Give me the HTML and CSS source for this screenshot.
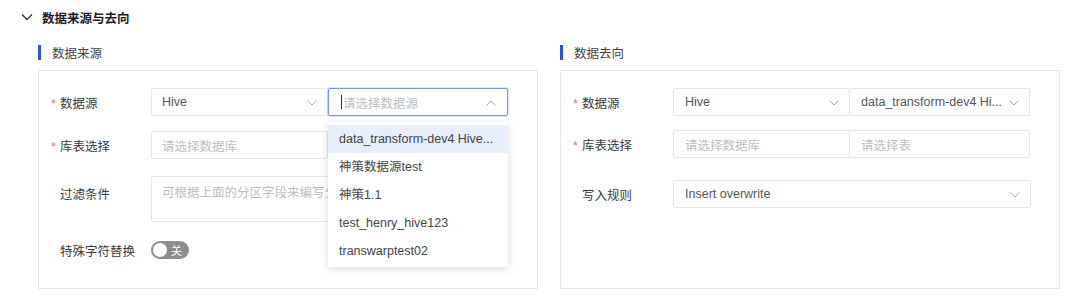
FILE: index.html
```html
<!DOCTYPE html>
<html lang="zh-CN">
<head>
<meta charset="utf-8">
<title>数据来源与去向</title>
<link rel="stylesheet" href="styles.css">
</head>
<body>
<div class="page">
  <div class="header">
    <svg class="collapse-icon" width="12" height="8" viewBox="0 0 12 8"><path d="M1 1.5 L6 6.5 L11 1.5" fill="none" stroke="#333" stroke-width="1.3"/></svg>
    <span class="header-title">数据来源与去向</span>
  </div>
  <div class="columns">
    <section class="col">
      <div class="sub-title"><span class="bar"></span>数据来源</div>
      <div class="box">
        <div class="row">
          <div class="label"><span class="req">*</span>数据源</div>
          <div class="controls">
            <div class="select s-a">
              <span class="val">Hive</span>
              <svg class="chev" width="10" height="6" viewBox="0 0 10 6"><path d="M0.5 0.5 L5 5 L9.5 0.5" fill="none" stroke="#a8a8a8" stroke-width="1"/></svg>
            </div>
            <div class="select s-b focused">
              <span class="caret"></span><span class="ph">请选择数据源</span>
              <svg class="chev" width="10" height="6" viewBox="0 0 10 6"><path d="M0.5 5.5 L5 1 L9.5 5.5" fill="none" stroke="#a8a8a8" stroke-width="1"/></svg>
              <ul class="dropdown">
                <li class="active">data_transform-dev4 Hive...</li>
                <li>神策数据源test</li>
                <li>神策1.1</li>
                <li>test_henry_hive123</li>
                <li>transwarptest02</li>
              </ul>
            </div>
          </div>
        </div>
        <div class="row r2">
          <div class="label"><span class="req">*</span>库表选择</div>
          <div class="controls">
            <div class="select s-a"><span class="ph">请选择数据库</span></div>
            <div class="select s-b"><span class="ph">请选择表</span></div>
          </div>
        </div>
        <div class="row r3">
          <div class="label label-top">过滤条件</div>
          <div class="controls">
            <div class="textarea"><span class="ph">可根据上面的分区字段来编写分区过滤条件</span></div>
          </div>
        </div>
        <div class="row r4">
          <div class="label">特殊字符替换</div>
          <div class="controls">
            <div class="switch"><span class="knob"></span><span class="switch-text">关</span></div>
          </div>
        </div>
      </div>
    </section>
    <section class="col">
      <div class="sub-title"><span class="bar"></span>数据去向</div>
      <div class="box">
        <div class="row">
          <div class="label"><span class="req">*</span>数据源</div>
          <div class="controls">
            <div class="select s-a pad12">
              <span class="val">Hive</span>
              <svg class="chev" width="10" height="6" viewBox="0 0 10 6"><path d="M0.5 0.5 L5 5 L9.5 0.5" fill="none" stroke="#a8a8a8" stroke-width="1"/></svg>
            </div>
            <div class="select s-b pad12">
              <span class="val ellip">data_transform-dev4 Hi...</span>
              <svg class="chev" width="10" height="6" viewBox="0 0 10 6"><path d="M0.5 0.5 L5 5 L9.5 0.5" fill="none" stroke="#a8a8a8" stroke-width="1"/></svg>
            </div>
          </div>
        </div>
        <div class="row rr2">
          <div class="label"><span class="req">*</span>库表选择</div>
          <div class="controls">
            <div class="select s-a pad12"><span class="ph">请选择数据库</span></div>
            <div class="select s-b pad12"><span class="ph">请选择表</span></div>
          </div>
        </div>
        <div class="row rr3">
          <div class="label">写入规则</div>
          <div class="controls">
            <div class="select s-full pad12">
              <span class="val">Insert overwrite</span>
              <svg class="chev" width="10" height="6" viewBox="0 0 10 6"><path d="M0.5 0.5 L5 5 L9.5 0.5" fill="none" stroke="#a8a8a8" stroke-width="1"/></svg>
            </div>
          </div>
        </div>
      </div>
    </section>
  </div>
</div>
</body>
</html>
```

FILE: styles.css
```css
* { box-sizing: border-box; }
html, body { margin: 0; padding: 0; background: #fff; }
body {
  width: 1080px;
  height: 303px;
  overflow: hidden;
  font-family: "Liberation Sans", "Noto Sans CJK SC", sans-serif;
  font-size: 12.5px;
  color: #3a3a3a;
}
.header {
  height: 34px;
  display: flex;
  align-items: center;
  padding-left: 21px;
}
.collapse-icon { display: block; }
.header-title {
  margin-left: 9px;
  font-weight: bold;
  font-size: 12.5px;
  color: #1c1c1c;
}
.columns {
  display: flex;
  padding-left: 38px;
  gap: 22px;
}
.col { width: 500px; }
.sub-title {
  height: 36px;
  display: flex;
  align-items: center;
  padding-top: 1px;
  color: #444;
}
.bar {
  width: 3px;
  height: 15px;
  background: #2454f0;
  margin-right: 11px;
}
.box {
  height: 219px;
  border: 1px solid #e6e6e6;
  padding-top: 17px;
}
.row {
  display: flex;
  align-items: center;
  min-height: 28px;
}
.label {
  width: 112px;
  padding-left: 21px;
  color: #3a3a3a;
  flex: none;
}
.req {
  display: inline-block;
  width: 9px;
  margin-left: -9px;
  color: #f06a6a;
}
.controls {
  display: flex;
  position: relative;
}
.select {
  position: relative;
  height: 28px;
  border: 1px solid #e6e6e6;
  border-radius: 2px;
  display: flex;
  align-items: center;
  padding-left: 10px;
  background: #fff;
}
.pad12 { padding-left: 11px; }
.select .chev {
  position: absolute;
  right: 10px;
  top: 11px;
}
.s-a { width: 177px; }
.s-b { width: 180px; }
.s-full { width: 358px; }
.s-b:not(.focused) { border-left: none; }
.val { color: #555; white-space: nowrap; }
.ph { color: #bdbdbd; white-space: nowrap; }
.focused {
  border: 1px solid #6f96f5;
  box-shadow: 0 0 0 1px rgba(111,150,245,0.25);
  padding-left: 12px;
}
.focused .chev { right: 11px; }
.caret {
  width: 1px;
  height: 14px;
  background: #333;
  margin-right: 1px;
}
.dropdown {
  position: absolute;
  left: -1px;
  top: 33px;
  width: 180px;
  margin: 0;
  padding: 3px 0 2px;
  list-style: none;
  background: #fff;
  box-shadow: 0 2px 8px rgba(0,0,0,0.15);
  z-index: 5;
}
.dropdown li {
  height: 28px;
  line-height: 28px;
  padding-left: 11px;
  padding-right: 8px;
  color: #444;
  white-space: nowrap;
  overflow: hidden;
}
.dropdown li.active { background: #e7effd; }
.r2 { margin-top: 15px; }
.r3 { margin-top: 17px; align-items: flex-start; }
.label-top { padding-top: 8px; }
.textarea {
  width: 357px;
  height: 46px;
  border: 1px solid #e6e6e6;
  border-radius: 2px;
  padding: 5px 10px;
  overflow: hidden;
}
.r4 { margin-top: 14px; }
.switch {
  width: 38px;
  height: 18px;
  border-radius: 9px;
  background: #8e8e8e;
  display: flex;
  align-items: center;
  padding-left: 2px;
}
.knob {
  width: 14px;
  height: 14px;
  border-radius: 50%;
  background: #fff;
}
.switch-text {
  color: #fff;
  font-size: 11px;
  margin-left: 4px;
}
.rr2 { margin-top: 14px; }
.rr3 { margin-top: 22px; }
```
